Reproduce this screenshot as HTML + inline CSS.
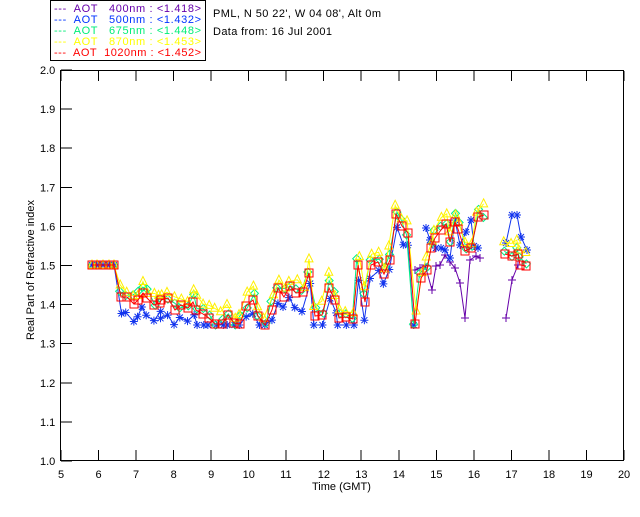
<!DOCTYPE html>
<html><head><meta charset="utf-8"><style>
body{margin:0;background:#fff;width:640px;height:512px;overflow:hidden}
svg text{font-family:"Liberation Sans",sans-serif;font-size:11px;white-space:pre}
</style></head><body>
<svg id="s" width="640" height="512" xmlns="http://www.w3.org/2000/svg" shape-rendering="crispEdges">
<rect x="50.5" y="0.5" width="155" height="60" fill="none" stroke="#000"/>
<g font-size="11">
<text x="54" y="12" fill="#6600aa" textLength="147" lengthAdjust="spacing">---  AOT   400nm : &lt;1.418&gt;</text>
<text x="54" y="23" fill="#0033ff" textLength="147" lengthAdjust="spacing">---  AOT   500nm : &lt;1.432&gt;</text>
<text x="54" y="34" fill="#00ee77" textLength="147" lengthAdjust="spacing">---  AOT   675nm : &lt;1.448&gt;</text>
<text x="54" y="45" fill="#ffff00" textLength="147" lengthAdjust="spacing">---  AOT   870nm : &lt;1.453&gt;</text>
<text x="54" y="56" fill="#ff0000" textLength="147" lengthAdjust="spacing">---  AOT  1020nm : &lt;1.452&gt;</text>
</g>
<text x="213" y="17" textLength="168" lengthAdjust="spacing">PML, N 50 22', W 04 08', Alt 0m</text>
<text x="213" y="35" textLength="119" lengthAdjust="spacing">Data from: 16 Jul 2001</text>
<rect x="60.5" y="70.5" width="563" height="390" fill="none" stroke="#000"/>
<text transform="translate(34,340) rotate(-90)" font-size="11">Real Part of Refractive index</text>
<text x="312" y="490" font-size="11">Time (GMT)</text>
<g id="ax"></g><g id="d" shape-rendering="auto"></g>
</svg>
<script>
var ns="http://www.w3.org/2000/svg",ax=document.getElementById('ax'),d=document.getElementById('d');
function el(n,a,p){var e=document.createElementNS(ns,n);for(var k in a)e.setAttribute(k,a[k]);(p||ax).appendChild(e);return e;}
for(var i=0;i<=10;i++){var y=461-i*39.1;var v=(1+i/10).toFixed(1);
 el('line',{x1:61,y1:y,x2:72,y2:y,stroke:'#000'});
 var t=el('text',{x:40,y:y+4,'font-size':11});t.textContent=v;}
for(var h=5;h<=20;h++){var x=61+(h-5)*37.53;
 el('line',{x1:x,y1:71,x2:x,y2:81,stroke:'#000'});el('line',{x1:x,y1:460,x2:x,y2:450,stroke:'#000'});
 var t=el('text',{x:x-(h>=10?6:3),y:478,'font-size':11});t.textContent=h;}
var red=[[92,265],[97,265],[103,265],[109,265],[114,265],[121,297],[127,297],[134,304],[138,300],[143,293],[147,298],[154,305],[160,303],[161,300],[168,298],[175,310],[181,305],[188,308],[193,302],[196,310],[203,314],[209,318],[215,324],[222,324],[228,315],[234,323],[240,324],[246,306],[253,300],[258,316],[265,325],[272,310],[278,288],[284,297],[290,286],[296,293],[303,292],[309,273],[315,316],[322,315],[329,288],[335,300],[339,318],[346,317],[353,319],[358,265],[365,302],[371,265],[378,262],[384,274],[390,260],[396,214],[402,226],[408,233],[415,324],[421,278],[427,270],[431,248],[435,238],[441,230],[446,224],[450,242],[455,222],[458,229],[465,251],[471,248],[478,217],[484,215],null,[505,254],[512,256],[518,254],[520,265],[526,266]];
var seed=3;function rnd(){seed=(seed*9301+49297)%233280;return seed/233280;}
function mk(off,clamp){return red.map(function(p){if(!p)return null;if(p[1]==265&&p[0]<116)return [p[0],265];var y=p[1]+off+(rnd()-0.5)*12;if(clamp)y=Math.min(y,325);return [p[0]+(rnd()-0.5)*3,y];});}
var yel=mk(-10,false),grn=mk(-3,false),blu=mk(14,true);
var pur=[[415,270],[420,268],[425,265],[432,290],[436,266],[440,265],[445,255],[450,262],[455,268],[460,283],[465,318],[470,260],[476,256],[480,258],null,[506,318],[512,280],[518,265]];
var bl2=[[426,228],[430,240],[436,248],[441,248],[445,250],[450,258],[455,220],[460,245],[466,232],[471,220],[474,246],[478,248],null,[506,243],[512,215],[517,215],[521,237],[527,250]];
blu=blu.filter(function(p){return !p||p[0]<420}).concat(bl2);
function line(pts,c){var s='';pts.forEach(function(p){if(!p){if(s)el('polyline',{points:s,fill:'none',stroke:c},d);s='';}else s+=p[0]+','+p[1]+' ';});if(s)el('polyline',{points:s,fill:'none',stroke:c},d);}
function star(p,c){el('path',{d:'M'+(p[0]-4)+' '+p[1]+'h8M'+p[0]+' '+(p[1]-4)+'v8M'+(p[0]-3)+' '+(p[1]-3)+'l6 6M'+(p[0]+3)+' '+(p[1]-3)+'l-6 6',stroke:c,fill:'none'},d);}
line(pur,'#6600aa');pur.forEach(function(p){if(p)el('path',{d:'M'+(p[0]-4)+' '+p[1]+'h8M'+p[0]+' '+(p[1]-4)+'v8',stroke:'#6600aa'},d);});
line(blu,'#1133ee');blu.forEach(function(p){if(p)star(p,'#1133ee');});
line(grn,'#00ee88');grn.forEach(function(p){if(p)el('path',{d:'M'+p[0]+' '+(p[1]-4)+'l4 4l-4 4l-4 -4z',stroke:'#00ee88',fill:'none'},d);});
line(yel,'#ffff00');yel.forEach(function(p){if(p)el('path',{d:'M'+p[0]+' '+(p[1]-5)+'l4 8h-8z',stroke:'#ffee00',fill:'none'},d);});
line(red,'#ff0000');red.forEach(function(p){if(p)el('rect',{x:p[0]-4,y:p[1]-4,width:8,height:8,stroke:'#ff0000',fill:'none'},d);});
</script>
</body></html>
